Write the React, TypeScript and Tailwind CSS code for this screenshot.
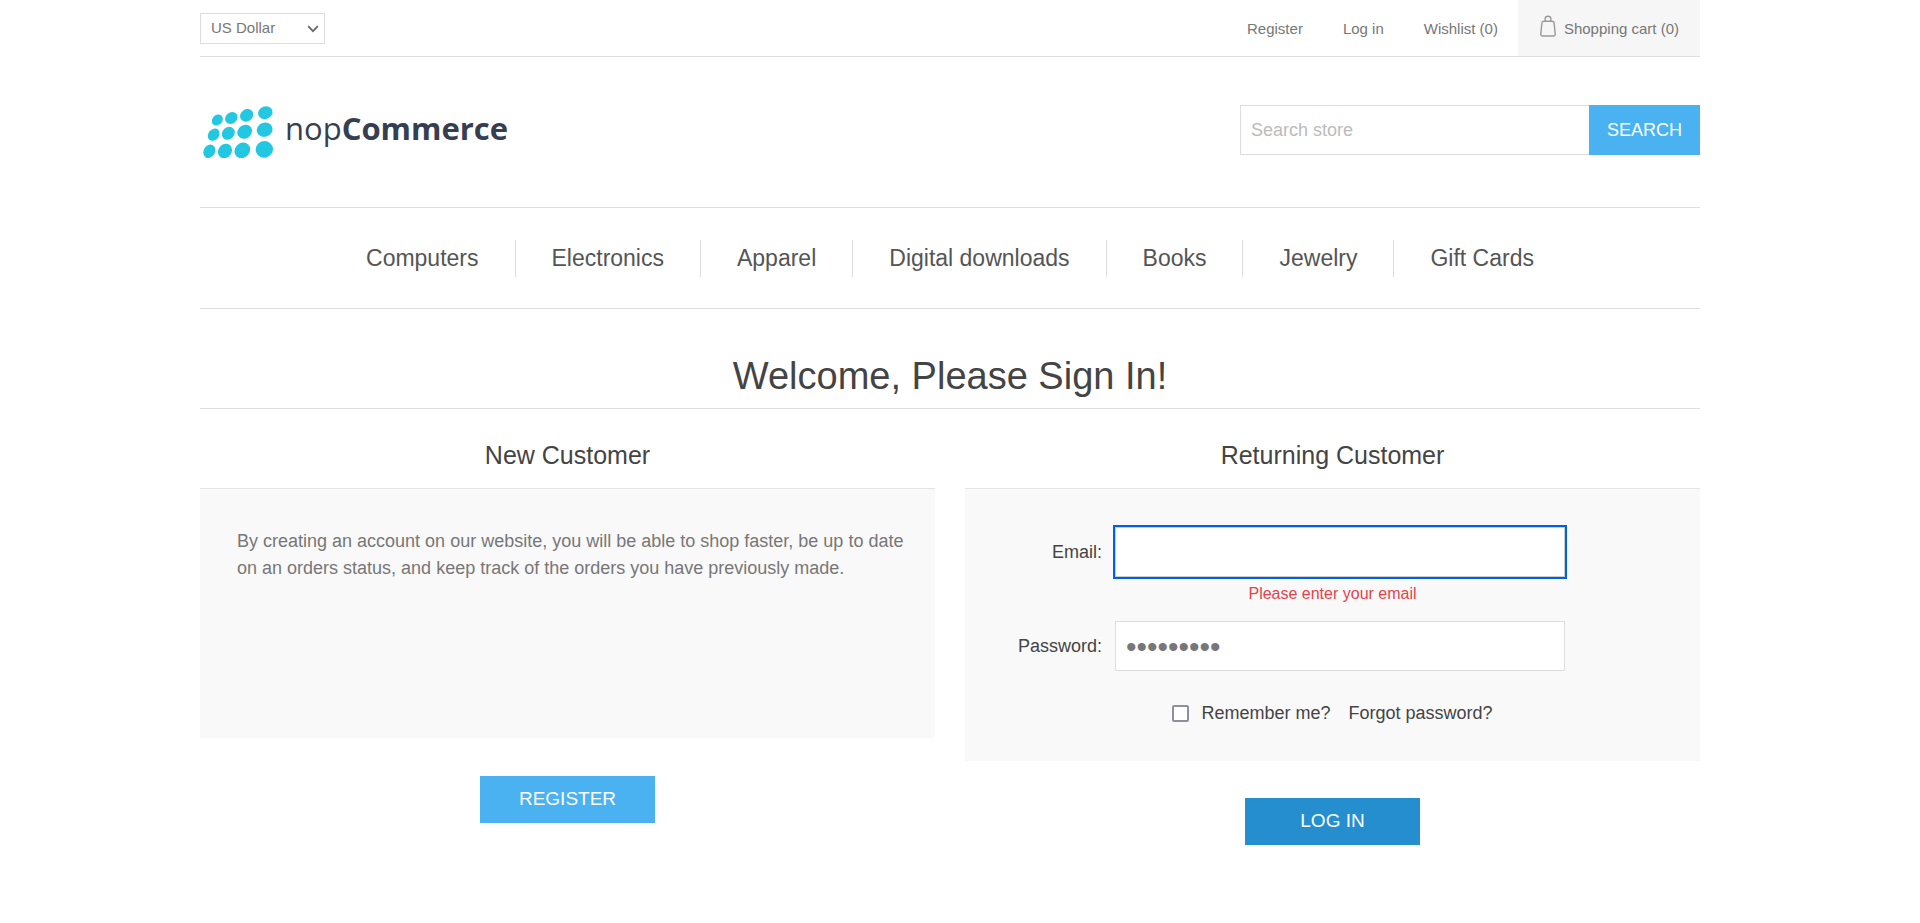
import { useState } from "react";

const categories = [
  "Computers",
  "Electronics",
  "Apparel",
  "Digital downloads",
  "Books",
  "Jewelry",
  "Gift Cards",
];

const accountLinks = ["Register", "Log in", "Wishlist (0)"];

const logoDots = [
  [82, 360, 18, 15, -45],
  [124, 354, 20, 17, -40],
  [170, 346, 21, 18, -35],
  [226, 338, 22, 19, -20],
  [71, 404, 20, 16, -50],
  [115, 400, 21, 18, -45],
  [164, 395, 23, 20, -35],
  [224, 389, 24, 21, -20],
  [58, 454, 21, 17, -60],
  [105, 453, 23, 20, -50],
  [157, 451, 25, 22, -45],
  [223, 448, 26, 25, -20],
];

function TopBar() {
  return (
    <div className="flex flex-wrap items-center justify-between border-b border-[#ddd] text-[15px] text-[#777]">
      <div className="relative">
        <select
          aria-label="Currency"
          className="h-[31px] w-[125px] appearance-none border border-[#ddd] bg-white pl-2.5 text-[15px] text-[#777]"
        >
          <option>US Dollar</option>
          <option>Euro</option>
        </select>
        <svg
          className="pointer-events-none absolute top-3 right-1.5 h-2 w-3"
          viewBox="0 0 12 8"
          fill="none"
          stroke="#666"
          strokeWidth="1.7"
        >
          <path d="M1.2 1.2 6 6.2l4.8-5" />
        </svg>
      </div>
      <div className="flex flex-wrap items-center">
        {accountLinks.map((label) => (
          <a key={label} href="#" className="px-5 pt-0.5 leading-[54px]">
            {label}
          </a>
        ))}
        <a href="#" className="flex h-14 items-center bg-[#f6f6f6] pt-0.5 pr-[21px] pl-[22px]">
          <svg
            className="mr-2 mb-1.5 h-[22px] w-4"
            viewBox="0 0 16 22"
            fill="none"
            stroke="#999"
            strokeWidth="1.4"
            strokeLinejoin="round"
          >
            <path d="M4 6.200h8c1.300 0 2 .7 2.100 1.800l1.100 11c.1 1.300-.6 2-1.800 2H2.600c-1.200 0-1.900-.7-1.800-2l1.100-11C2 6.900 2.700 6.200 4 6.200Z" />
            <path d="M5.200 6V3.600C5.200 2 6.200 1.200 8 1.200s2.800.8 2.800 2.400V6" />
          </svg>
          Shopping cart (0)
        </a>
      </div>
    </div>
  );
}

function Header() {
  return (
    <header className="flex flex-wrap items-center justify-between gap-6 border-b border-[#ddd] pt-[45px] pb-[49px]">
      <a href="#" aria-label="nopCommerce" className="flex items-center">
        <svg className="h-14 w-[78px]" viewBox="30 306 234 168" fill="#22c8e1">
          {logoDots.map(([cx, cy, rx, ry, angle]) => (
            <ellipse
              key={`${cx}-${cy}`}
              cx={cx}
              cy={cy}
              rx={rx}
              ry={ry}
              transform={`rotate(${angle} ${cx} ${cy})`}
            />
          ))}
        </svg>
        <span className="pb-1 pl-[7px] font-['Open_Sans','Noto_Sans',sans-serif] text-[31px] leading-10 font-medium text-[#363f51]">
          nop<span className="font-bold">Commerce</span>
        </span>
      </a>
      <form className="flex" onSubmit={(e) => e.preventDefault()}>
        <input
          type="text"
          aria-label="Search store"
          placeholder="Search store"
          className="h-[50px] w-[349px] border border-r-0 border-[#ddd] bg-white px-2.5 text-[18px] text-[#777] placeholder:text-[#bbb]"
        />
        <button type="submit" className="h-[50px] w-[111px] bg-[#4ab2f1] text-[18px] text-white">
          SEARCH
        </button>
      </form>
    </header>
  );
}

function Navigation() {
  return (
    <nav className="border-b border-[#ddd] pt-8 pb-[31px]">
      <ul className="flex flex-wrap justify-center divide-x divide-[#ddd]">
        {categories.map((name) => (
          <li key={name} className="px-9">
            <a href="#" className="block text-[23px] leading-[37px] text-[#555]">
              {name}
            </a>
          </li>
        ))}
      </ul>
    </nav>
  );
}

function NewCustomer() {
  return (
    <section className="flex flex-col items-center">
      <h2 className="pb-[17px] text-[25px] leading-8 text-[#444]">New Customer</h2>
      <div className="min-h-[250px] w-full border-t border-[#e4e4e4] bg-[#f9f9f9] py-[39px] pr-6 pl-[37px] text-[18px] leading-[27px] text-[#777]">
        By creating an account on our website, you will be able to shop faster, be up to date on an
        orders status, and keep track of the orders you have previously made.
      </div>
      <button type="button" className="mt-[38px] h-[47px] w-[175px] bg-[#4ab2f1] text-[19px] text-white">
        REGISTER
      </button>
    </section>
  );
}

function ReturningCustomer() {
  const [email, setEmail] = useState("");
  const [password, setPassword] = useState("secret123");
  return (
    <form className="flex flex-col items-center" onSubmit={(e) => e.preventDefault()}>
      <h2 className="pb-[17px] text-[25px] leading-8 text-[#444]">Returning Customer</h2>
      <div className="flex w-full flex-col border-t border-[#e4e4e4] bg-[#f9f9f9] pt-[38px] pb-[34px] text-[18px] text-[#444]">
        <div className="flex items-center">
          <label htmlFor="email" className="w-[137px] shrink-0 text-right">
            Email:
          </label>
          <input
            id="email"
            type="email"
            value={email}
            onChange={(e) => setEmail(e.target.value)}
            className="ml-[13px] h-[50px] w-full max-w-[450px] border border-[#ccc] bg-white px-2.5 text-[#777] outline-2 outline-[#0061e0]"
          />
        </div>
        <p className="pt-[5px] text-center text-[16px] leading-6 text-[#e4434b]">
          Please enter your email
        </p>
        <div className="flex items-center pt-[15px]">
          <label htmlFor="password" className="w-[137px] shrink-0 text-right">
            Password:
          </label>
          <input
            id="password"
            type="password"
            value={password}
            onChange={(e) => setPassword(e.target.value)}
            className="ml-[13px] h-[50px] w-full max-w-[450px] border border-[#ddd] bg-white px-2.5 pt-0.5 text-3xl text-[#777]"
          />
        </div>
        <div className="flex flex-wrap items-center justify-center gap-x-[18px] pt-[29px] leading-[27px]">
          <label className="flex items-center gap-3">
            <input
              type="checkbox"
              className="size-[17px] appearance-none rounded-[2px] border-2 border-[#8f8f9d] bg-white"
            />
            Remember me?
          </label>
          <a href="#">Forgot password?</a>
        </div>
      </div>
      <button type="submit" className="mt-[37px] h-[47px] w-[175px] bg-[#248ece] text-[19px] text-white">
        LOG IN
      </button>
    </form>
  );
}

export default function App() {
  return (
    <div className="min-h-screen bg-white pr-5 font-['Liberation_Sans',Arial,sans-serif]">
      <div className="mx-auto w-full max-w-[1500px]">
        <TopBar />
        <Header />
        <Navigation />
        <main>
          <h1 className="border-b border-[#ddd] pt-[45px] pb-[9px] text-center text-[38px] leading-[45px] text-[#444]">
            Welcome, Please Sign In!
          </h1>
          <div className="grid items-start gap-[30px] pt-[30px] lg:grid-cols-2">
            <NewCustomer />
            <ReturningCustomer />
          </div>
        </main>
      </div>
    </div>
  );
}
